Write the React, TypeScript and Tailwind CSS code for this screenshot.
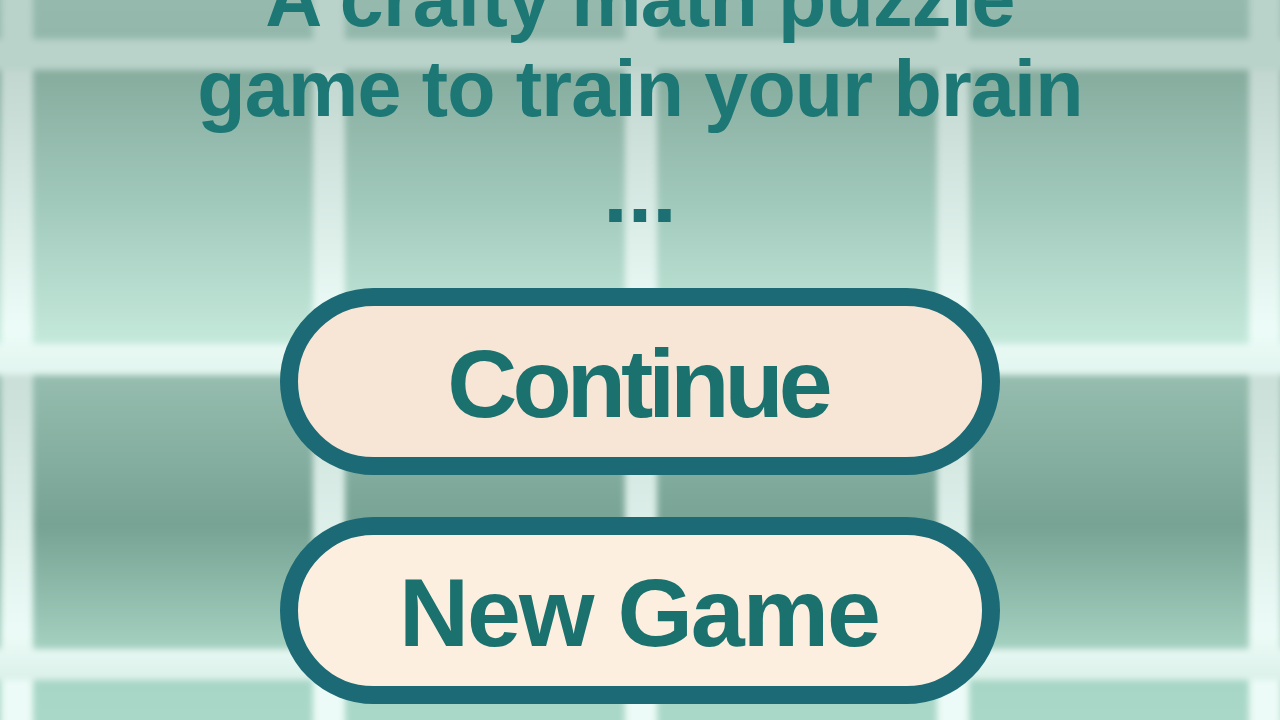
import React from "react";

const rows = [
  {
    row: "bg-[#b9d2ca]",
    tile: "bg-linear-to-b from-[#a4c7bb] to-[#93b8ab]",
  },
  {
    row: "bg-linear-to-b from-[#c2d7d0] via-[#edfcf8] via-85% to-[#e2f5ef]",
    tile: "bg-linear-to-b from-[#86ac9e] via-[#a2cabc] to-[#c5eadc]",
  },
  {
    row: "bg-linear-to-b from-[#cadfd8] via-[#ecfbf7] via-85% to-[#dcf1ea]",
    tile: "bg-linear-to-b from-[#96bdaf] via-[#77a394] via-55% to-[#a5d1c1]",
  },
  {
    row: "bg-[#ecfbf7]",
    tile: "bg-linear-to-b from-[#a7d6c6] to-[#bce5d6]",
  },
];

const cols = [0, 1, 2, 3, 4, 5];

function Background() {
  return (
    <div className="absolute left-[-279px] top-[-235px] flex flex-col blur-[3px]">
      {rows.map((r, i) => (
        <div key={i} className={`flex gap-[32px] pb-[31px] ${r.row}`}>
          {cols.map((c) => (
            <div key={c} className={`h-[274px] w-[280px] shrink-0 ${r.tile}`} />
          ))}
        </div>
      ))}
    </div>
  );
}

export default function App() {
  return (
    <div
      className="relative h-[720px] w-[1280px] overflow-hidden bg-[#d6ebe4]"
      style={{ fontFamily: '"Liberation Sans", Arial, Helvetica, sans-serif' }}
    >
      <Background />
      <div className="relative z-10 flex flex-col items-center">
        <h1 className="mt-[-46px] text-center text-[79px] font-bold leading-[90px] tracking-[-0.01em] text-[#1d7875]">
          A crafty math puzzle
          <br />
          game to train your brain
        </h1>
        <div className="mt-[13px] text-[88px] font-bold leading-[90px] text-[#1c6f73]">...</div>
        <button className="mt-[51px] flex h-[187px] w-[720px] items-center justify-center rounded-full border-[18px] border-[#1c6a75] bg-[#f7e5d6]">
          <span className="pr-[5px] pt-[3px] text-[97px] font-bold leading-none tracking-[-5px] text-[#1b716e]">
            Continue
          </span>
        </button>
        <button className="mt-[42px] flex h-[187px] w-[720px] items-center justify-center rounded-full border-[18px] border-[#1c6a75] bg-[#fdefdf]">
          <span className="pr-[2px] pt-[3px] text-[97px] font-bold leading-none tracking-[-2px] text-[#1b716e]">
            New Game
          </span>
        </button>
      </div>
    </div>
  );
}
